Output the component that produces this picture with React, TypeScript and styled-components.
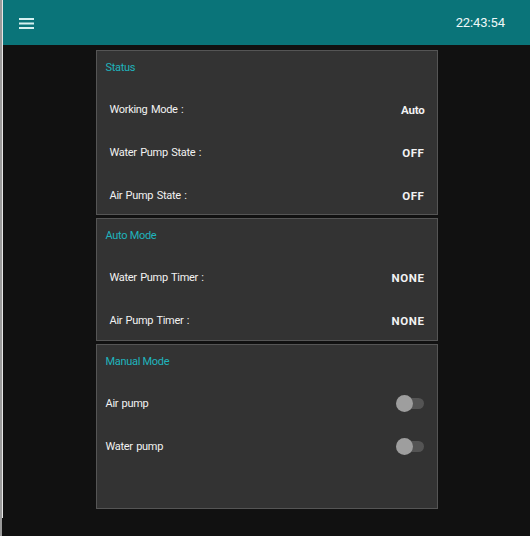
import React from 'react';
import styled, { createGlobalStyle } from 'styled-components';

const GlobalStyle = createGlobalStyle`
  html, body {
    margin: 0;
    padding: 0;
    background: #111111;
    font-family: Roboto, "Liberation Sans", sans-serif;
  }
`;

const Shell = styled.div`
  height: 536px;
  border-left: 2px solid #9a9a9a;
  background: #111111;
  box-sizing: border-box;
`;

const Frame = styled.div`
  height: 518px;
  border-left: 1px solid #e6e6e6;
  display: flex;
  flex-direction: column;
`;

const TopBar = styled.header`
  height: 45px;
  flex-shrink: 0;
  background: #0a7479;
  display: flex;
  align-items: center;
  justify-content: space-between;
  padding: 0 25px 0 15px;
`;

const MenuButton = styled.button`
  background: none;
  border: 0;
  padding: 0;
  width: 16px;
  height: 16px;
  display: flex;
  align-items: center;
  justify-content: center;
`;

const Clock = styled.span`
  color: #eef8f8;
  font-size: 13px;
  letter-spacing: -0.1px;
`;

const Content = styled.main`
  display: flex;
  flex-direction: column;
  align-items: center;
  gap: 3px;
  padding-top: 5px;
`;

const Card = styled.section<{ $extra?: number }>`
  width: 342px;
  box-sizing: border-box;
  background: #333333;
  border: 1px solid #555555;
  padding-bottom: ${p => p.$extra ?? 0}px;
`;

const CardTitle = styled.h2`
  margin: 0 0 8px;
  height: 32px;
  display: flex;
  align-items: center;
  padding-left: 9px;
  font-size: 11px;
  letter-spacing: -0.3px;
  font-weight: 400;
  color: #1fb3bd;
`;

const Rows = styled.div`
  display: flex;
  flex-direction: column;
  gap: 6px;
`;

const Row = styled.div<{ $indent: number }>`
  height: 37px;
  display: flex;
  align-items: center;
  justify-content: space-between;
  padding: 0 12px 0 ${p => p.$indent}px;
  color: #f2f2f2;
  font-size: 11px;
  letter-spacing: -0.3px;
  word-spacing: 1px;
`;

const Value = styled.span<{ $caps?: boolean }>`
  font-weight: 700;
  font-size: 11.5px;
  letter-spacing: ${p => (p.$caps ? '0.6px' : '-0.2px')};
`;

const Toggle = styled.span`
  position: relative;
  width: 26px;
  height: 11px;
  border-radius: 6px;
  background: #545454;
  margin-right: 1px;

  &::before {
    content: '';
    position: absolute;
    left: -2px;
    top: -3px;
    width: 17px;
    height: 17px;
    border-radius: 50%;
    background: #9e9e9e;
  }
`;

const statusRows = [
  ['Working Mode :', 'Auto'],
  ['Water Pump State :', 'OFF'],
  ['Air Pump State :', 'OFF'],
];

const timerRows = [
  ['Water Pump Timer :', 'NONE'],
  ['Air Pump Timer :', 'NONE'],
];

export default function App() {
  return (
    <>
      <GlobalStyle />
      <Shell>
        <Frame>
          <TopBar>
            <MenuButton aria-label="menu">
              <svg width="15" height="12" viewBox="0 0 15 12">
                <rect x="0" y="1" width="15" height="2" fill="#d5f0f0" />
                <rect x="0" y="5.5" width="15" height="2" fill="#d5f0f0" />
                <rect x="0" y="10" width="15" height="2" fill="#d5f0f0" />
              </svg>
            </MenuButton>
            <Clock>22:43:54</Clock>
          </TopBar>
          <Content>
            <Card>
              <CardTitle>Status</CardTitle>
              <Rows>
                {statusRows.map(([label, value]) => (
                  <Row key={label} $indent={13}>
                    <span>{label}</span>
                    <Value $caps={value === 'OFF'}>{value}</Value>
                  </Row>
                ))}
              </Rows>
            </Card>
            <Card $extra={1}>
              <CardTitle>Auto Mode</CardTitle>
              <Rows>
                {timerRows.map(([label, value]) => (
                  <Row key={label} $indent={13}>
                    <span>{label}</span>
                    <Value $caps>{value}</Value>
                  </Row>
                ))}
              </Rows>
            </Card>
            <Card $extra={43}>
              <CardTitle>Manual Mode</CardTitle>
              <Rows>
                <Row $indent={9}>
                  <span>Air pump</span>
                  <Toggle />
                </Row>
                <Row $indent={9}>
                  <span>Water pump</span>
                  <Toggle />
                </Row>
              </Rows>
            </Card>
          </Content>
        </Frame>
      </Shell>
    </>
  );
}
